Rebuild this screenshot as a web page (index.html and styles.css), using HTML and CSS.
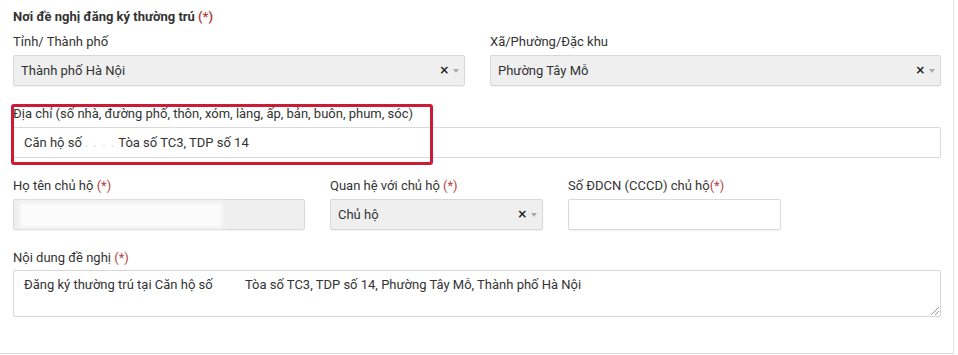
FILE: index.html
```html
<!DOCTYPE html>
<html lang="vi">
<head>
<meta charset="utf-8">
<link rel="stylesheet" href="styles.css">
</head>
<body>
<div class="panel">
  <div class="title">Nơi đề nghị đăng ký thường trú <span class="req">(*)</span></div>

  <div class="row two">
    <div class="field">
      <div class="label">Tỉnh/ Thành phố</div>
      <div class="select"><span class="val">Thành phố Hà Nội</span><span class="clear">×</span><span class="arrow"></span></div>
    </div>
    <div class="field">
      <div class="label">Xã/Phường/Đặc khu</div>
      <div class="select"><span class="val">Phường Tây Mỗ</span><span class="clear">×</span><span class="arrow"></span></div>
    </div>
  </div>

  <div class="row one addr">
    <div class="field">
      <div class="label">Địa chỉ (số nhà, đường phố, thôn, xóm, làng, ấp, bản, buôn, phum, sóc)</div>
      <div class="input white pad10">Căn hộ số <span class="blur">. . . .</span> Tòa số TC3, TDP số 14</div>
    </div>
    <div class="mark"></div>
  </div>

  <div class="row three">
    <div class="field">
      <div class="label">Họ tên chủ hộ <span class="req">(*)</span></div>
      <div class="input gray"><span class="redact"></span></div>
    </div>
    <div class="field">
      <div class="label">Quan hệ với chủ hộ <span class="req">(*)</span></div>
      <div class="select"><span class="val">Chủ hộ</span><span class="clear">×</span><span class="arrow"></span></div>
    </div>
    <div class="field">
      <div class="label">Số ĐDCN (CCCD) chủ hộ<span class="req">(*)</span></div>
      <div class="input white shadow"></div>
    </div>
  </div>

  <div class="row one last">
    <div class="field">
      <div class="label">Nội dung đề nghị <span class="req">(*)</span></div>
      <div class="textarea">Đăng ký thường trú tại Căn hộ số <span class="gap"></span> Tòa số TC3, TDP số 14, Phường Tây Mỗ, Thành phố Hà Nội<span class="grip"></span></div>
    </div>
  </div>
</div>
</body>
</html>
```

FILE: styles.css
```css
* { box-sizing: border-box; }
html, body { margin: 0; padding: 0; background: #fff; }
body {
  font-family: Roboto, "Liberation Sans", Arial, sans-serif;
  font-size: 13px;
  color: #333;
  width: 958px;
  height: 355px;
  overflow: hidden;
}
.panel {
  width: 954px;
  height: 354px;
  border-right: 1px solid #e3e3e3;
  border-bottom: 1px solid #dcdcdc;
  padding: 8px 0 0 13px;
}
.title {
  font-weight: bold;
  line-height: 18px;
  height: 18px;
}
.req { color: #b5433f; font-weight: normal; }
.title .req { font-weight: bold; }
.row {
  display: grid;
  column-gap: 25px;
  width: 928px;
}
.row.two { grid-template-columns: 452px 451px; margin-top: 7px; }
.row.one { grid-template-columns: 928px; margin-top: 19px; }
.row.three { grid-template-columns: 292px 213px 213px; margin-top: 19px; }
.row.one.last { margin-top: 19px; }
.row.last .label { margin-bottom: 3px; }
.addr { position: relative; }
.label {
  line-height: 18px;
  height: 18px;
  margin-bottom: 4px;
  white-space: nowrap;
}
.select {
  height: 31px;
  background: #efefef;
  border: 1px solid #d8d8d8;
  border-radius: 2px;
  box-shadow: 0 1px 1px rgba(0,0,0,0.06);
  display: flex;
  align-items: center;
  padding: 0 5px 0 7px;
}
.select .val { flex: 1; }
.select .clear {
  font-weight: bold;
  font-size: 15px;
  color: #222;
  line-height: 1;
  margin-right: 2px;
  font-family: "DejaVu Sans", sans-serif;
  transform: scale(0.8);
}
.select .arrow {
  width: 0; height: 0;
  border-left: 3px solid transparent;
  border-right: 3px solid transparent;
  border-top: 4px solid #aaa;
}
.input {
  height: 31px;
  border: 1px solid #dadada;
  border-radius: 2px;
  display: flex;
  align-items: center;
  padding: 0 8px;
}
.input.white { background: #fff; }
.input.shadow { box-shadow: 0 1px 1px rgba(0,0,0,0.06); }
.input.gray { background: #efefef; box-shadow: 0 1px 1px rgba(0,0,0,0.05); }
.input.pad10 { padding-left: 10px; }
.blur { color: #d6d6d6; letter-spacing: 1px; margin: 0 3px; }
.redact {
  display: block;
  width: 200px;
  height: 22px;
  background: #fbfbfb;
  margin-left: -1px;
  box-shadow: 0 0 4px 2px #f7f7f7;
}
.mark {
  position: absolute;
  left: -2px;
  top: -1px;
  width: 422px;
  height: 61px;
  border: 3px solid #cc1b36;
  border-radius: 3px;
}
.textarea {
  position: relative;
  height: 47px;
  border: 1px solid #d6d6d6;
  border-radius: 2px;
  padding: 5px 10px;
  line-height: 18px;
}
.gap { display: inline-block; width: 26px; }
.grip {
  position: absolute;
  right: 1px; bottom: 1px;
  width: 8px; height: 8px;
  background: linear-gradient(135deg, transparent 45%, #999 45%, #999 52%, transparent 52%, transparent 70%, #999 70%, #999 77%, transparent 77%);
}
```
